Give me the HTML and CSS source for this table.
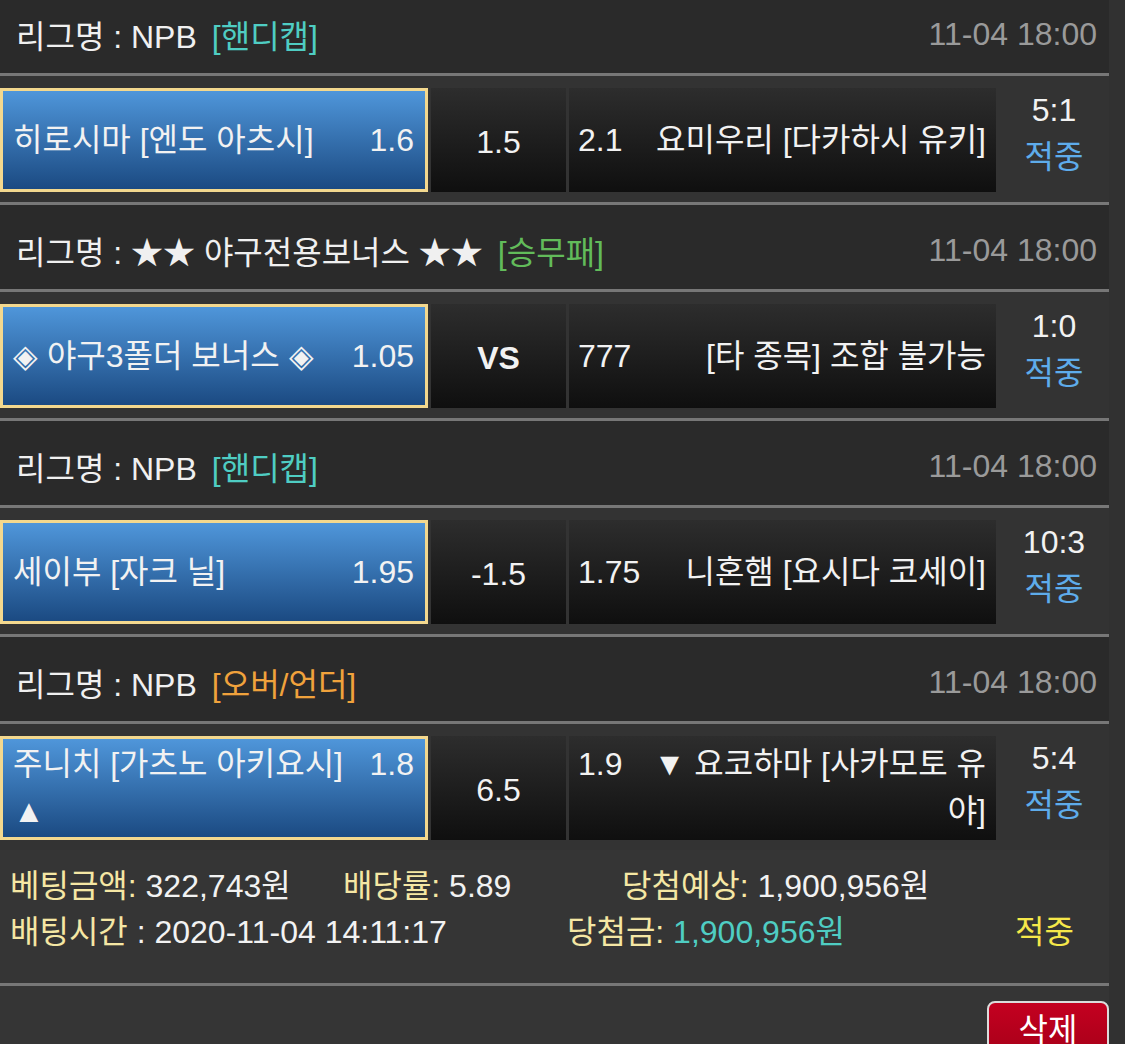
FILE: index.html
```html
<!DOCTYPE html>
<html>
<head>
<meta charset="utf-8">
<title>베팅내역</title>
<link rel="stylesheet" href="styles.css">
</head>
<body>
<div class="slip">

  <div class="league">
    <span class="league-name">리그명 : NPB</span>
    <span class="type handi">[핸디캡]</span>
    <span class="date">11-04 18:00</span>
  </div>
  <div class="game">
    <div class="home picked"><div class="inner"><span class="odds">1.6</span>히로시마 [엔도 아츠시]</div></div>
    <div class="mid">1.5</div>
    <div class="away"><div class="inner"><span class="odds">2.1</span>요미우리 [다카하시 유키]</div></div>
    <div class="score">5:1<br><span class="hit">적중</span></div>
  </div>

  <div class="league">
    <span class="league-name">리그명 : ★★ 야구전용보너스 ★★</span>
    <span class="type wdl">[승무패]</span>
    <span class="date">11-04 18:00</span>
  </div>
  <div class="game">
    <div class="home picked"><div class="inner"><span class="odds">1.05</span>◈ 야구3폴더 보너스 ◈</div></div>
    <div class="mid vs">VS</div>
    <div class="away"><div class="inner"><span class="odds">777</span>[타 종목] 조합 불가능</div></div>
    <div class="score">1:0<br><span class="hit">적중</span></div>
  </div>

  <div class="league">
    <span class="league-name">리그명 : NPB</span>
    <span class="type handi">[핸디캡]</span>
    <span class="date">11-04 18:00</span>
  </div>
  <div class="game">
    <div class="home picked"><div class="inner"><span class="odds">1.95</span>세이부 [자크 닐]</div></div>
    <div class="mid">-1.5</div>
    <div class="away"><div class="inner"><span class="odds">1.75</span>니혼햄 [요시다 코세이]</div></div>
    <div class="score">10:3<br><span class="hit">적중</span></div>
  </div>

  <div class="league">
    <span class="league-name">리그명 : NPB</span>
    <span class="type ou">[오버/언더]</span>
    <span class="date">11-04 18:00</span>
  </div>
  <div class="game last">
    <div class="home picked"><div class="inner"><span class="odds">1.8</span>주니치 [가츠노 아키요시] ▲</div></div>
    <div class="mid">6.5</div>
    <div class="away"><div class="inner"><span class="odds">1.9</span>▼ 요코하마 [사카모토 유야]</div></div>
    <div class="score">5:4<br><span class="hit">적중</span></div>
  </div>

  <div class="summary">
    <div class="sum-row first">
      <span class="c1"><span class="lbl">베팅금액:</span> 322,743원</span>
      <span class="c2"><span class="lbl">배당률:</span> 5.89</span>
      <span class="c3"><span class="lbl">당첨예상:</span> 1,900,956원</span>
    </div>
    <div class="sum-row second">
      <span class="c1"><span class="lbl">배팅시간</span> : 2020-11-04 14:11:17</span>
      <span class="c2"><span class="lbl">당첨금:</span> <span class="won">1,900,956원</span></span>
      <span class="c3 result">적중</span>
    </div>
  </div>

  <div class="actions">
    <button class="btn-del">삭제</button>
  </div>

</div>
</body>
</html>
```

FILE: styles.css
```css
body{margin:0;background:#313131;font-family:"Liberation Sans","Noto Sans CJK KR",sans-serif;font-size:32px;color:#f2f2f2;overflow:hidden;}
.slip{width:1109px;margin-top:-11px;}

.league{
  display:flex;
  align-items:center;
  height:78px;
  padding:6px 12px 0 16px;
  background:#2a2a2a;
  border-bottom:3px solid #777;
}
.league-name{color:#f0f0f0;}
.type{margin-left:15px;}
.handi{color:#4fcdc3;}
.wdl{color:#62bb5a;}
.ou{color:#f0a23c;}
.date{margin-left:auto;color:#9a9a9a;}

.game{
  display:flex;
  gap:3px;
  height:104px;
  padding:12px 0 10px 0;
  background:#333;
  border-bottom:3px solid #777;
}
.game.last{border-bottom:0;}

.home,.away,.mid{display:flex;align-items:center;line-height:47px;}
.home{
  width:428px;
  box-sizing:border-box;
  padding:0 11px 0 10px;
  border:3px solid #f3d88e;
  background:linear-gradient(to bottom,#4f96da,#1b4a82);
}
.home .odds{float:right;margin-left:16px;}
.home .inner{width:100%;}

.mid{
  width:135px;
  justify-content:center;
  padding-top:4px;
  box-sizing:border-box;
  background:linear-gradient(to bottom,#2d2d2d,#0f0f0f);
}
.mid.vs{font-weight:bold;}

.away{
  width:427px;
  box-sizing:border-box;
  padding:0 10px 0 9px;
  background:linear-gradient(to bottom,#2d2d2d,#0f0f0f);
}
.away .inner{width:100%;text-align:right;}
.away .odds{float:left;margin-right:16px;}

.score{flex:1;text-align:center;line-height:47px;margin-top:-1px;}
.hit{color:#5eaceb;}

.summary{padding:13px 0 28px 10px;background:#353535;border-bottom:3px solid #777;line-height:46px;}
.sum-row{display:flex;}
.lbl{color:#f5e7a4;}
.first .c1{width:333px;}
.first .c2{width:279px;}
.second .c1{width:557px;}
.second .c2{width:448px;}
.won{color:#4fcdc3;}
.result{color:#f6e84a;}

.actions{background:#353535;height:80px;display:flex;justify-content:flex-end;padding-top:15px;box-sizing:border-box;}
.btn-del{
  width:122px;
  height:60px;
  border:2px solid #dcdcdc;
  border-radius:8px;
  background:linear-gradient(to bottom,#c40020,#a50018);
  color:#fff;
  font-family:"Liberation Sans","Noto Sans CJK KR",sans-serif;
  font-size:32px;
  padding:0 0 8px 0;
}
```
